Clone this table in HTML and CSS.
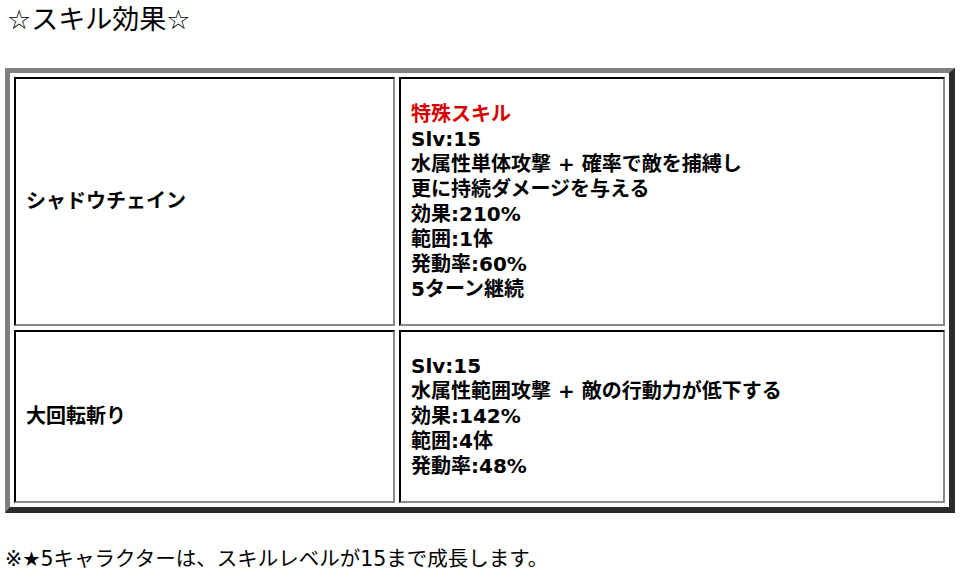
FILE: index.html
```html
<!DOCTYPE html>
<html lang="ja">
<head>
<meta charset="utf-8">
<title>スキル効果</title>
<link rel="stylesheet" href="styles.css">
</head>
<body>
<h2 class="title">☆スキル効果☆</h2>
<table class="skills">
  <colgroup><col class="c1"><col class="c2"></colgroup>
  <tr class="r1">
    <td class="name">シャドウチェイン</td>
    <td class="desc">
      <div class="red">特殊スキル</div>
      <div>Slv:15</div>
      <div>水属性単体攻撃 + 確率で敵を捕縛し</div>
      <div>更に持続ダメージを与える</div>
      <div>効果:210%</div>
      <div>範囲:1体</div>
      <div>発動率:60%</div>
      <div>5ターン継続</div>
    </td>
  </tr>
  <tr class="r2">
    <td class="name">大回転斬り</td>
    <td class="desc">
      <div>Slv:15</div>
      <div>水属性範囲攻撃 + 敵の行動力が低下する</div>
      <div>効果:142%</div>
      <div>範囲:4体</div>
      <div>発動率:48%</div>
    </td>
  </tr>
</table>
<p class="note">※★5キャラクターは、スキルレベルが15まで成長します。</p>
</body>
</html>
```

FILE: styles.css
```css
html, body {
  margin: 0;
  padding: 0;
  background: #ffffff;
  color: #000000;
  font-family: "DejaVu Sans", "Noto Sans CJK JP", sans-serif;
}

.title {
  margin: 0;
  padding-left: 7px;
  font-size: 27px;
  font-weight: normal;
  line-height: 40px;
  height: 40px;
}

.skills {
  margin: 28px 0 0 5px;
  width: 950px;
  border-collapse: separate;
  border-spacing: 4px;
  border-style: solid;
  border-width: 5px 6px 6px 5px;
  border-color: #808080 #2b2b2b #2b2b2b #808080;
  table-layout: fixed;
}

.c1 { width: 381px; }
.c2 { width: 546px; }

.skills td {
  border-style: solid;
  border-width: 2px;
  border-color: #000000 #8a8a8a #8a8a8a #000000;
  padding: 22px 10px;
  font-size: 20px;
  font-weight: bold;
  line-height: 25px;
  vertical-align: middle;
  box-sizing: border-box;
}

.skills td.name {
  padding-left: 10px;
}

.r1 td { height: 249px; }
.r2 td { height: 172px; }

.red { color: #d40000; }

.note {
  margin: 31px 0 0 5px;
  font-size: 20.5px;
  line-height: 30px;
}
```
